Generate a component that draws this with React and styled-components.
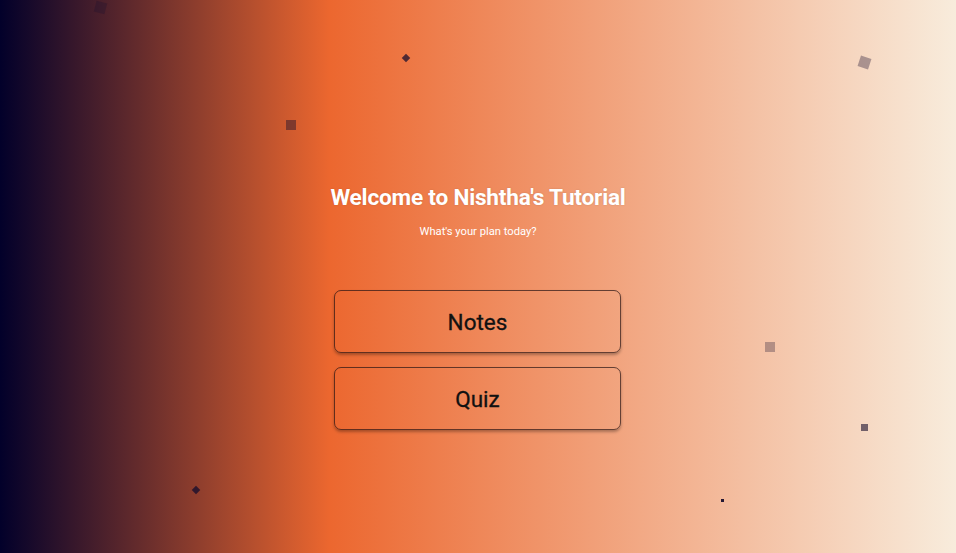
import React from "react";
import styled, { createGlobalStyle } from "styled-components";

const Global = createGlobalStyle`
  html, body { margin: 0; padding: 0; }
  body { font-family: Roboto, "Liberation Sans", sans-serif; }
`;

const Page = styled.div`
  position: relative;
  width: 956px;
  height: 553px;
  overflow: hidden;
  background: linear-gradient(to right, #02002a 0%, #ec672f 34.5%, #f8ecdc 100%);
  display: flex;
  flex-direction: column;
  align-items: center;
  padding-top: 184px;
  box-sizing: border-box;
`;

const Title = styled.h1`
  margin: 0;
  font-size: 22.6px;
  font-weight: 700;
  color: #fff;
  letter-spacing: -0.2px;
  text-shadow: 0 0 2px rgba(0, 0, 0, 0.15);
`;

const Subtitle = styled.p`
  margin: 14px 0 0;
  font-size: 11.2px;
  color: #fff;
`;

const Buttons = styled.div`
  margin-top: 52px;
  margin-right: 1px;
  display: flex;
  flex-direction: column;
  gap: 14px;
`;

const Button = styled.button`
  width: 287px;
  height: 63px;
  border: 1px solid rgba(40, 20, 20, 0.7);
  border-radius: 7px;
  background: transparent;
  box-shadow: 0 2px 3px rgba(0, 0, 0, 0.3);
  font-family: Roboto, "Liberation Sans", sans-serif;
  font-size: 22.5px;
  font-weight: 400;
  color: #111;
  -webkit-text-stroke: 0.3px #111;
  cursor: pointer;
`;

const Particle = styled.div`
  position: absolute;
  left: ${(p) => p.x}px;
  top: ${(p) => p.y}px;
  width: ${(p) => p.s}px;
  height: ${(p) => p.s}px;
  background: rgba(25, 15, 45, ${(p) => p.o});
  transform: rotate(${(p) => p.r}deg);
`;

const particles = [
  { x: 95, y: 2, s: 11, r: 15, o: 0.3 },
  { x: 403, y: 55, s: 6, r: 45, o: 0.75 },
  { x: 286, y: 120, s: 10, r: 0, o: 0.45 },
  { x: 859, y: 57, s: 11, r: 18, o: 0.35 },
  { x: 765, y: 342, s: 10, r: 0, o: 0.3 },
  { x: 861, y: 424, s: 7, r: 0, o: 0.6 },
  { x: 193, y: 487, s: 6, r: 45, o: 0.8 },
  { x: 721, y: 499, s: 3, r: 0, o: 0.95 },
];

export default function App() {
  return (
    <>
      <Global />
      <Page>
        {particles.map((p, i) => (
          <Particle key={i} {...p} />
        ))}
        <Title>Welcome to Nishtha's Tutorial</Title>
        <Subtitle>What's your plan today?</Subtitle>
        <Buttons>
          <Button>Notes</Button>
          <Button>Quiz</Button>
        </Buttons>
      </Page>
    </>
  );
}
